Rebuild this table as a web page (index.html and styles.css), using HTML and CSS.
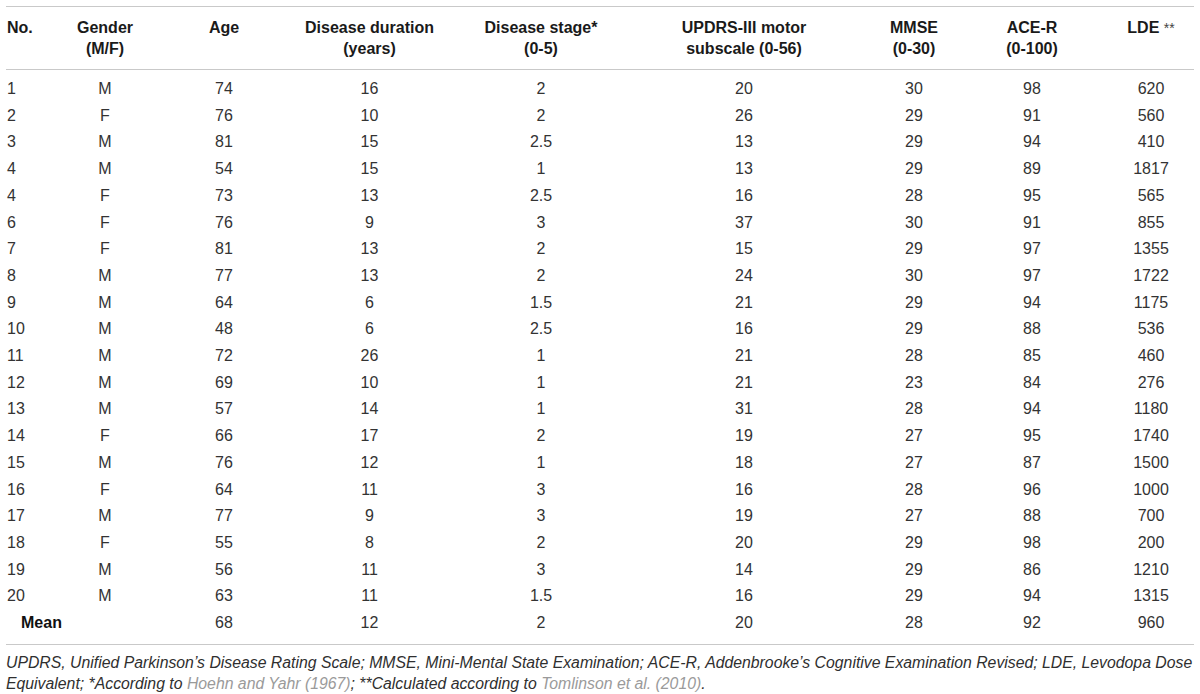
FILE: index.html
```html
<!DOCTYPE html>
<html lang="en">
<head>
<meta charset="utf-8">
<title>Patient characteristics</title>
<link rel="stylesheet" href="styles.css">
</head>
<body>
<div class="wrap">
<table class="data">
  <colgroup>
    <col class="c1"><col class="c2"><col class="c3"><col class="c4"><col class="c5"><col class="c6"><col class="c7"><col class="c8"><col class="c9">
  </colgroup>
  <thead>
    <tr>
      <th class="left">No.</th>
      <th>Gender<br>(M/F)</th>
      <th>Age</th>
      <th>Disease duration<br>(years)</th>
      <th>Disease stage*<br>(0-5)</th>
      <th>UPDRS-III motor<br>subscale (0-56)</th>
      <th>MMSE<br>(0-30)</th>
      <th>ACE-R<br>(0-100)</th>
      <th class="last">LDE <span class="ast">**</span></th>
    </tr>
  </thead>
  <tbody>
    <tr><td class="left">1</td><td>M</td><td>74</td><td>16</td><td>2</td><td>20</td><td>30</td><td>98</td><td class="last">620</td></tr>
    <tr><td class="left">2</td><td>F</td><td>76</td><td>10</td><td>2</td><td>26</td><td>29</td><td>91</td><td class="last">560</td></tr>
    <tr><td class="left">3</td><td>M</td><td>81</td><td>15</td><td>2.5</td><td>13</td><td>29</td><td>94</td><td class="last">410</td></tr>
    <tr><td class="left">4</td><td>M</td><td>54</td><td>15</td><td>1</td><td>13</td><td>29</td><td>89</td><td class="last">1817</td></tr>
    <tr><td class="left">4</td><td>F</td><td>73</td><td>13</td><td>2.5</td><td>16</td><td>28</td><td>95</td><td class="last">565</td></tr>
    <tr><td class="left">6</td><td>F</td><td>76</td><td>9</td><td>3</td><td>37</td><td>30</td><td>91</td><td class="last">855</td></tr>
    <tr><td class="left">7</td><td>F</td><td>81</td><td>13</td><td>2</td><td>15</td><td>29</td><td>97</td><td class="last">1355</td></tr>
    <tr><td class="left">8</td><td>M</td><td>77</td><td>13</td><td>2</td><td>24</td><td>30</td><td>97</td><td class="last">1722</td></tr>
    <tr><td class="left">9</td><td>M</td><td>64</td><td>6</td><td>1.5</td><td>21</td><td>29</td><td>94</td><td class="last">1175</td></tr>
    <tr><td class="left">10</td><td>M</td><td>48</td><td>6</td><td>2.5</td><td>16</td><td>29</td><td>88</td><td class="last">536</td></tr>
    <tr><td class="left">11</td><td>M</td><td>72</td><td>26</td><td>1</td><td>21</td><td>28</td><td>85</td><td class="last">460</td></tr>
    <tr><td class="left">12</td><td>M</td><td>69</td><td>10</td><td>1</td><td>21</td><td>23</td><td>84</td><td class="last">276</td></tr>
    <tr><td class="left">13</td><td>M</td><td>57</td><td>14</td><td>1</td><td>31</td><td>28</td><td>94</td><td class="last">1180</td></tr>
    <tr><td class="left">14</td><td>F</td><td>66</td><td>17</td><td>2</td><td>19</td><td>27</td><td>95</td><td class="last">1740</td></tr>
    <tr><td class="left">15</td><td>M</td><td>76</td><td>12</td><td>1</td><td>18</td><td>27</td><td>87</td><td class="last">1500</td></tr>
    <tr><td class="left">16</td><td>F</td><td>64</td><td>11</td><td>3</td><td>16</td><td>28</td><td>96</td><td class="last">1000</td></tr>
    <tr><td class="left">17</td><td>M</td><td>77</td><td>9</td><td>3</td><td>19</td><td>27</td><td>88</td><td class="last">700</td></tr>
    <tr><td class="left">18</td><td>F</td><td>55</td><td>8</td><td>2</td><td>20</td><td>29</td><td>98</td><td class="last">200</td></tr>
    <tr><td class="left">19</td><td>M</td><td>56</td><td>11</td><td>3</td><td>14</td><td>29</td><td>86</td><td class="last">1210</td></tr>
    <tr><td class="left">20</td><td>M</td><td>63</td><td>11</td><td>1.5</td><td>16</td><td>29</td><td>94</td><td class="last">1315</td></tr>
    <tr class="mean"><td class="left"><strong>Mean</strong></td><td></td><td>68</td><td>12</td><td>2</td><td>20</td><td>28</td><td>92</td><td class="last">960</td></tr>
  </tbody>
</table>
<p class="note">UPDRS, Unified Parkinson’s Disease Rating Scale; MMSE, Mini-Mental State Examination; ACE-R, Addenbrooke’s Cognitive Examination Revised; LDE, Levodopa Dose Equivalent; *According to <span class="ref">Hoehn and Yahr (1967)</span>; **Calculated according to <span class="ref">Tomlinson et al. (2010)</span>.</p>
</div>
</body>
</html>
```

FILE: styles.css
```css
html, body {
  margin: 0;
  padding: 0;
  background: #ffffff;
}

.wrap {
  padding: 0 6px;
  font-family: "Liberation Sans", Arial, Helvetica, sans-serif;
  color: #1f1f1f;
}

.data {
  width: 1188px;
  border-collapse: collapse;
  table-layout: fixed;
  margin-top: 6px;
  font-size: 16px;
}

.c1 { width: 54px; }
.c2 { width: 90px; }
.c3 { width: 148px; }
.c4 { width: 143px; }
.c5 { width: 200px; }
.c6 { width: 206px; }
.c7 { width: 134px; }
.c8 { width: 102px; }
.c9 { width: 111px; }

.data thead tr {
  border-top: 1px solid #c9c9c9;
  border-bottom: 1px solid #c9c9c9;
}

.data th {
  font-weight: bold;
  line-height: 21px;
  padding: 10px 0 10px 0;
  text-align: center;
  vertical-align: top;
  color: #1a1a1a;
}

.data td {
  line-height: 26.7px;
  padding: 0;
  text-align: center;
  color: #333333;
}

.data .left {
  text-align: left;
  padding-left: 1px;
}

.data .last {
  padding-left: 25px;
}

.data tbody tr:first-child td {
  padding-top: 6px;
}

.data tbody tr:last-child td {
  padding-bottom: 7px;
}

.data tbody tr:last-child {
  border-bottom: 1px solid #c9c9c9;
}

.mean .left {
  padding-left: 15px;
}

.mean strong {
  font-weight: bold;
  color: #111;
}

.ast {
  font-weight: normal;
  font-size: 14px;
  color: #444;
}

.note {
  margin: 0;
  padding-top: 7px;
  font-size: 15.8px;
  line-height: 21px;
  font-style: italic;
  color: #2f2f2f;
}

.ref {
  color: #9a9a9a;
}
```
